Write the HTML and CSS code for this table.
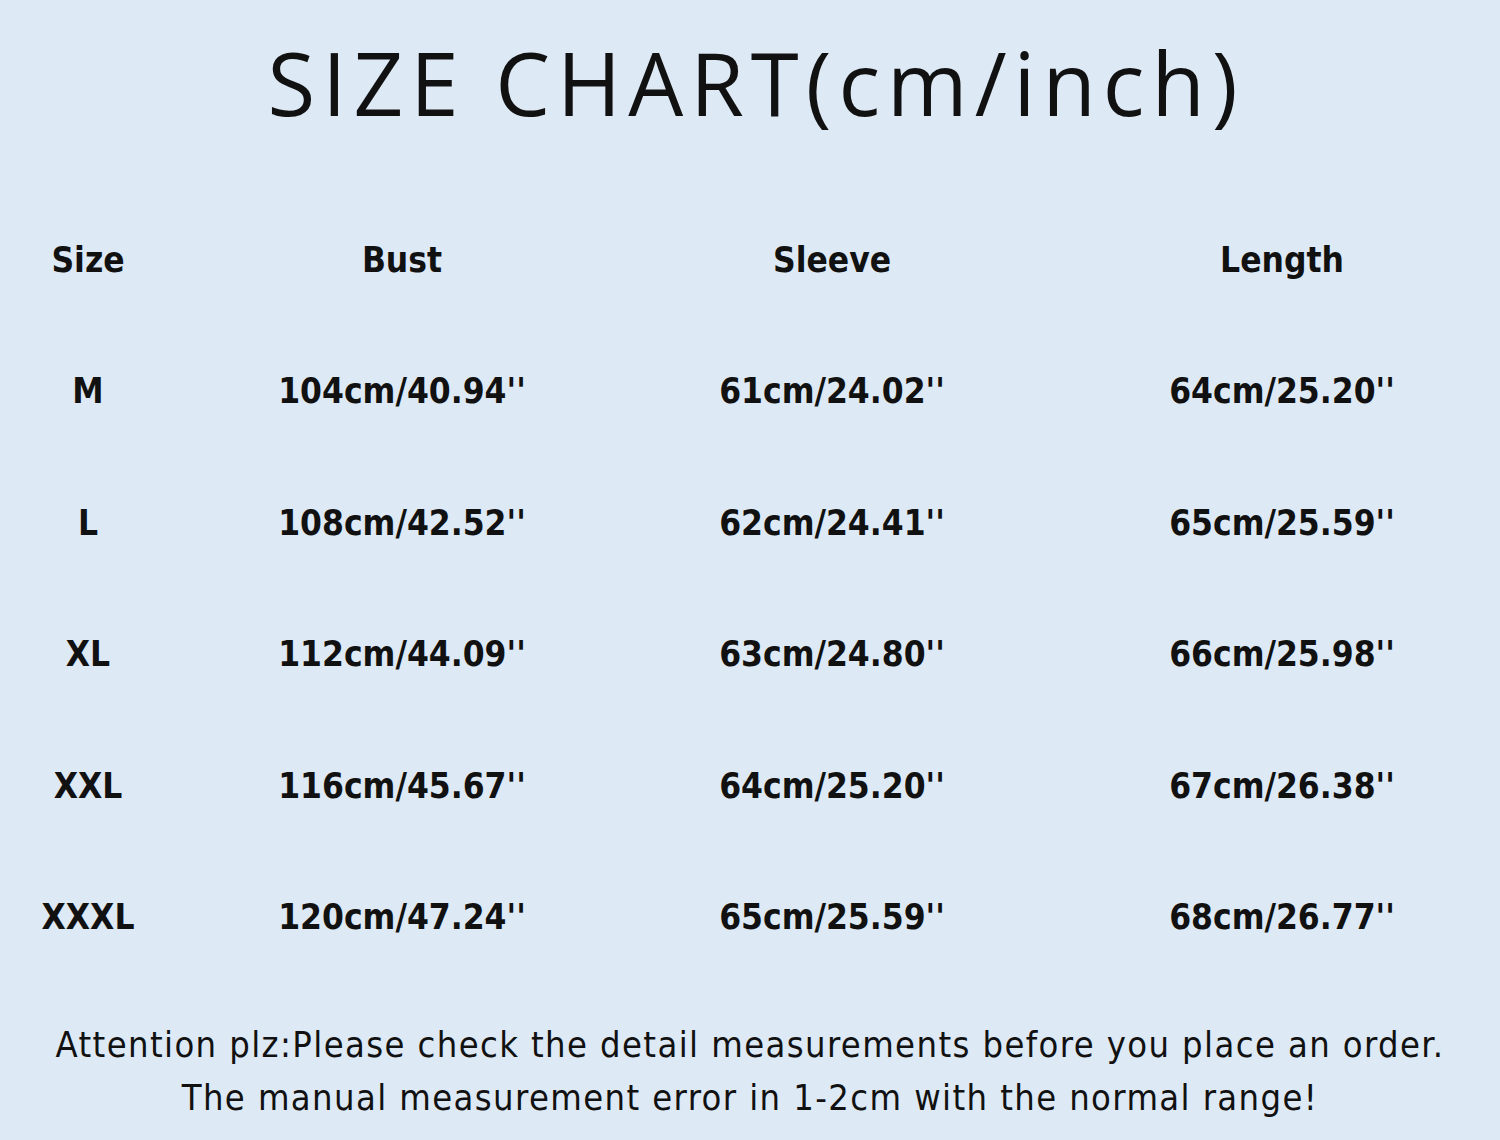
FILE: index.html
```html
<!DOCTYPE html>
<html>
<head>
<meta charset="utf-8">
<link rel="stylesheet" href="styles.css">
</head>
<body>
<div class="page">
  <h1 class="title">SIZE CHART(cm/inch)</h1>
  <div class="chart">
    <div class="row head"><span>Size</span><span>Bust</span><span>Sleeve</span><span>Length</span></div>
    <div class="row"><span>M</span><span>104cm/40.94''</span><span>61cm/24.02''</span><span>64cm/25.20''</span></div>
    <div class="row"><span>L</span><span>108cm/42.52''</span><span>62cm/24.41''</span><span>65cm/25.59''</span></div>
    <div class="row"><span>XL</span><span>112cm/44.09''</span><span>63cm/24.80''</span><span>66cm/25.98''</span></div>
    <div class="row"><span>XXL</span><span>116cm/45.67''</span><span>64cm/25.20''</span><span>67cm/26.38''</span></div>
    <div class="row"><span>XXXL</span><span>120cm/47.24''</span><span>65cm/25.59''</span><span>68cm/26.77''</span></div>
  </div>
  <div class="note">
    <p>Attention plz:Please check the detail measurements before you place an order.</p>
    <p>The manual measurement error in 1-2cm with the normal range!</p>
  </div>
</div>
</body>
</html>
```

FILE: styles.css
```css
html, body {
  margin: 0;
  padding: 0;
  background: #dde9f5;
}
.page {
  width: 1500px;
  height: 1140px;
  display: flex;
  flex-direction: column;
  background: #dde9f5;
  color: #111;
  overflow: hidden;
}
.title {
  margin: 0;
  height: 194px;
  display: flex;
  align-items: flex-start;
  justify-content: center;
  padding-left: 12px;
  box-sizing: border-box;
  padding-top: 17px;
  font-family: "Open Sans", sans-serif;
  font-weight: 400;
  font-size: 87px;
  line-height: 130px;
  letter-spacing: 7px;
}
.chart {
  display: flex;
  flex-direction: column;
}
.row {
  display: grid;
  grid-template-columns: 176px 452px 408px 464px;
  height: 131.5px;
  align-items: center;
  justify-items: center;
  font-family: "DejaVu Sans", sans-serif;
  font-stretch: condensed;
  font-weight: bold;
  font-size: 35px;
}
.row > span:nth-child(4) {
  padding-left: 28px;
}
.note {
  padding-top: 35px;
  font-family: "DejaVu Sans", sans-serif;
  font-stretch: condensed;
  font-size: 36px;
  line-height: 53px;
  letter-spacing: 1.4px;
  text-align: center;
}
.note p {
  margin: 0;
}
```
